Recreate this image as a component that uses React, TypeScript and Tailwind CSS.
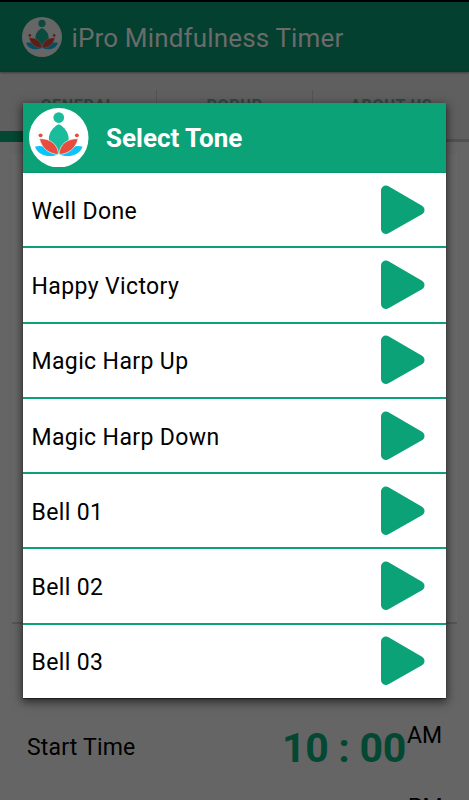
import React from "react";

const TONES = [
  "Well Done",
  "Happy Victory",
  "Magic Harp Up",
  "Magic Harp Down",
  "Bell 01",
  "Bell 02",
  "Bell 03",
];

const TABS = ["GENERAL", "POPUP", "ABOUT US"];

function LotusLogo({ className }: { className?: string }) {
  return (
    <svg viewBox="0 0 60 60" className={className}>
      <circle cx="30" cy="30" r="30" fill="#fff" />
      <circle cx="30" cy="9.6" r="5.4" fill="#1abc9c" />
      <path
        d="M30 16.5C24.5 19 20 25 20 31C20 38 25 43 30 46C35 43 40 38 40 31C40 25 35.5 19 30 16.5Z"
        fill="#1abc9c"
      />
      <path
        d="M6 39C13 37 22 40 29.6 46.6C21 50.5 9.5 48.5 6 39ZM54 39C47 37 38 40 30.4 46.6C39 50.5 50.5 48.5 54 39Z"
        fill="#0cc4fa"
      />
      <path
        d="M10.5 31C21 30.5 29.5 36.5 29.7 47C20 46 13 41 10.5 31ZM49.5 31C39 30.5 30.5 36.5 30.3 47C40 46 47 41 49.5 31Z"
        fill="#e74c3c"
        stroke="#fff"
        strokeWidth="0.6"
      />
      <circle cx="11.7" cy="27.6" r="2" fill="#e74c3c" />
      <circle cx="48.3" cy="27.6" r="2" fill="#e74c3c" />
    </svg>
  );
}

function PlayIcon() {
  return (
    <svg viewBox="0 0 44 50" className="h-[50px] w-[44px]">
      <path
        d="M5 5.5L38.5 25L5 44Z"
        fill="#0ca278"
        stroke="#0ca278"
        strokeWidth="10"
        strokeLinejoin="round"
      />
    </svg>
  );
}

function TimerScreen() {
  return (
    <div className="flex h-[800px] flex-col border-t-2 border-black bg-[#656565]">
      <header className="z-10 flex h-[70px] shrink-0 items-center border-b-2 border-[#053c2a] bg-[#044030] pl-[22px] pt-[2px] shadow-[0_1px_2px_rgba(0,0,0,0.35)]">
        <LotusLogo className="h-10 w-10 brightness-[0.4]" />
        <h1 className="ml-[9.500px] whitespace-nowrap pt-[2px] text-[26px] leading-[32px] tracking-[0.160px] text-[#6b6b6b]">
          iPro Mindfulness Timer
        </h1>
      </header>
      <nav className="flex h-[70px] shrink-0 border-b-[3px] border-[#515151] bg-[#5f5f5f] pt-[18px]">
        {TABS.map((tab, i) => (
          <div
            key={tab}
            className={`h-[38px] flex-1 pt-[6px] text-center text-base font-bold leading-[20px] tracking-[0.700px] text-[#2c4a40] ${
              i > 0 ? "border-l border-[#545454]" : ""
            }`}
          >
            {tab}
          </div>
        ))}
      </nav>
      <div className="-mt-[11px] h-[11px] w-[157px] shrink-0 bg-[#044733]" />
      <section className="mx-[12px] mt-[12px] h-[470px] shrink-0 border-b-2 border-[#565656] bg-[#686868]" />
      <div className="mt-[100px] flex h-[48px] shrink-0 items-center pl-[27px] text-black">
        <span className="w-[255px] text-[23px] leading-[30px] tracking-[0.200px]">
          Start Time
        </span>
        <span className="w-[125px] whitespace-nowrap text-[41px] font-bold leading-[48px] tracking-[-0.300px] text-[#044733]">
          10 : 00
        </span>
        <span className="-mt-[24px] text-[23px] leading-[28px]">AM</span>
      </div>
      <div className="mt-[22px] h-[14px] shrink-0 overflow-hidden pl-[408px] text-[23px] leading-[28px] text-black">
        PM
      </div>
    </div>
  );
}

function ToneDialog() {
  return (
    <div className="absolute left-[23px] top-[103px] z-20 w-[423px] bg-white shadow-[0_1px_1px_0_rgba(0,0,0,0.4),0_3px_9px_1px_rgba(0,0,0,0.6)]">
      <div className="flex h-[70px] items-center border-b border-[#08966e] bg-[#0ca278] pl-[6px]">
        <LotusLogo className="h-[59.500px] w-[59.500px]" />
        <h2 className="ml-[17.500px] text-[26px] font-bold leading-[32px] text-white">
          Select Tone
        </h2>
      </div>
      <ul>
        {TONES.map((tone) => (
          <li
            key={tone}
            className="flex h-[75.300px] items-center justify-between border-b-2 border-[#0ca278] pl-[8.500px] pr-[21px] last:h-[73.200px] last:border-b-0"
          >
            <span className="pt-[4px] text-[23px] leading-[30px] tracking-[0.380px] text-black">
              {tone}
            </span>
            <PlayIcon />
          </li>
        ))}
      </ul>
    </div>
  );
}

export default function App() {
  return (
    <div className="relative h-[800px] w-[469px] overflow-hidden bg-black font-['Roboto',sans-serif]">
      <TimerScreen />
      <ToneDialog />
    </div>
  );
}
